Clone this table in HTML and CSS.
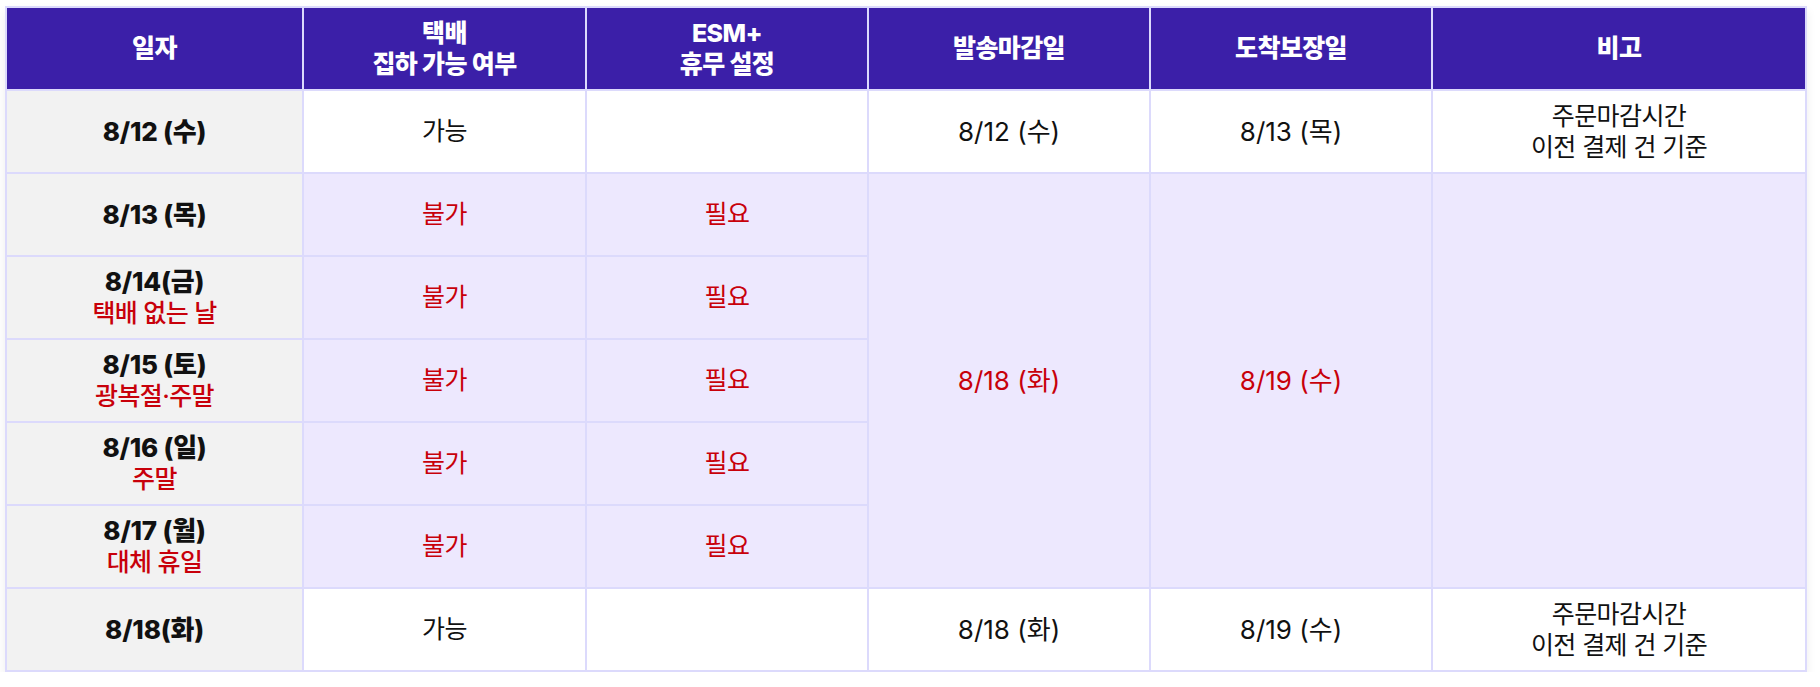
FILE: index.html
```html
<!DOCTYPE html>
<html lang="ko">
<head>
<meta charset="utf-8">
<link rel="stylesheet" href="styles.css">
</head>
<body>
<table class="sched">
  <colgroup>
    <col class="c1"><col class="c2"><col class="c3"><col class="c4"><col class="c5"><col class="c6">
  </colgroup>
  <thead>
    <tr>
      <th>일자</th>
      <th>택배<br>집하 가능 여부</th>
      <th>ESM+<br>휴무 설정</th>
      <th>발송마감일</th>
      <th>도착보장일</th>
      <th>비고</th>
    </tr>
  </thead>
  <tbody>
    <tr class="open">
      <td class="day">8/12 (수)</td>
      <td>가능</td>
      <td></td>
      <td class="date">8/12 (수)</td>
      <td class="date">8/13 (목)</td>
      <td>주문마감시간<br>이전 결제 건 기준</td>
    </tr>
    <tr class="closed">
      <td class="day">8/13 (목)</td>
      <td class="red">불가</td>
      <td class="red">필요</td>
      <td class="red date" rowspan="5">8/18 (화)</td>
      <td class="red date" rowspan="5">8/19 (수)</td>
      <td rowspan="5"></td>
    </tr>
    <tr class="closed">
      <td class="day">8/14(금)<br><span class="note">택배 없는 날</span></td>
      <td class="red">불가</td>
      <td class="red">필요</td>
    </tr>
    <tr class="closed">
      <td class="day">8/15 (토)<br><span class="note">광복절·주말</span></td>
      <td class="red">불가</td>
      <td class="red">필요</td>
    </tr>
    <tr class="closed">
      <td class="day">8/16 (일)<br><span class="note">주말</span></td>
      <td class="red">불가</td>
      <td class="red">필요</td>
    </tr>
    <tr class="closed">
      <td class="day">8/17 (월)<br><span class="note">대체 휴일</span></td>
      <td class="red">불가</td>
      <td class="red">필요</td>
    </tr>
    <tr class="open">
      <td class="day">8/18(화)</td>
      <td>가능</td>
      <td></td>
      <td class="date">8/18 (화)</td>
      <td class="date">8/19 (수)</td>
      <td>주문마감시간<br>이전 결제 건 기준</td>
    </tr>
  </tbody>
</table>
</body>
</html>
```

FILE: styles.css
```css
html, body {
  margin: 0;
  padding: 0;
  background: #ffffff;
}
body {
  padding: 6px 0 0 5px;
  font-family: "Inter", "Noto Sans CJK KR", sans-serif;
  color: #111111;
}
.sched {
  border-collapse: collapse;
  table-layout: fixed;
  width: 1800px;
  border: 2px solid #dcdafc;
  box-shadow: 0 5px 10px rgba(0, 0, 0, 0.07);
}
.c1 { width: 297px; }
.c2 { width: 283px; }
.c3 { width: 282px; }
.c4 { width: 282px; }
.c5 { width: 282px; }
.c6 { width: 374px; }
.sched th,
.sched td {
  border: 2px solid #dcdafc;
  text-align: center;
  vertical-align: middle;
  height: 81px;
  padding: 0;
  font-size: 25px;
  line-height: 31px;
  letter-spacing: -0.6px;
}
.sched th {
  background: #3b1fa8;
  color: #ffffff;
  font-weight: 800;
  font-size: 25px;
  line-height: 31px;
}
.sched td {
  font-weight: 400;
}
.sched td.date {
  font-size: 26px;
  letter-spacing: 0;
}
.open td { background: #ffffff; }
.closed td { background: #ede8fe; }
.sched td.day {
  background: #f2f2f2;
  font-weight: 800;
  font-size: 26px;
  letter-spacing: -0.2px;
  color: #111111;
}
.red { color: #c8000a; }
.note {
  color: #c8000a;
  font-weight: 500;
  font-size: 25px;
  letter-spacing: -0.6px;
}
```
